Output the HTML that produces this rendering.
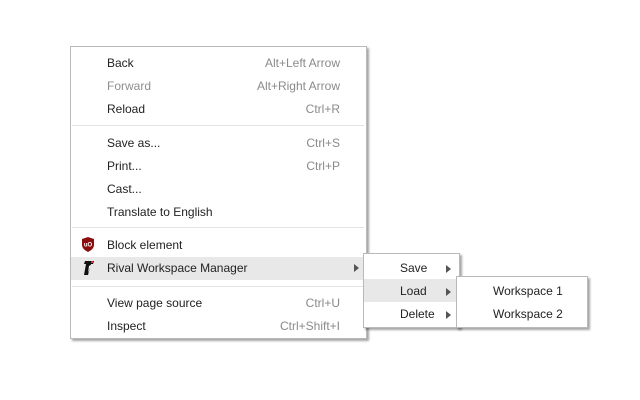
<!DOCTYPE html>
<html><head><meta charset="utf-8"><style>
body{margin:0;width:640px;height:400px;background:#fff;position:relative;overflow:hidden;font-family:"Liberation Sans",sans-serif;font-size:12px;color:#222}
.m{position:absolute;background:#fff;border:1px solid #b9b9b9;box-shadow:2px 2px 2px rgba(0,0,0,.35)}
.i{position:absolute;height:23px;line-height:23px;white-space:nowrap}
.s{position:absolute;color:#8a8a8a;text-align:right;height:23px;line-height:23px}
.sep{position:absolute;height:1px;background:#e3e3e3}
.hl{position:absolute;background:#e8e8e8}
.ar{position:absolute;width:0;height:0;border-top:4px solid transparent;border-bottom:4px solid transparent;border-left:5px solid #555}
.g{color:#8f8f8f}
</style></head><body>
<div class="m" style="left:70px;top:46px;width:295px;height:291px"></div>
<div class="hl" style="left:71px;top:257px;width:295px;height:23px"></div>
<div class="i" style="left:107px;top:52px">Back</div><div class="s" style="right:300px;top:52px">Alt+Left Arrow</div>
<div class="i g" style="left:107px;top:75px">Forward</div><div class="s" style="right:300px;top:75px">Alt+Right Arrow</div>
<div class="i" style="left:107px;top:98px">Reload</div><div class="s" style="right:300px;top:98px">Ctrl+R</div>
<div class="sep" style="left:72px;top:125px;width:292px"></div>
<div class="i" style="left:107px;top:132px">Save as...</div><div class="s" style="right:300px;top:132px">Ctrl+S</div>
<div class="i" style="left:107px;top:155px">Print...</div><div class="s" style="right:300px;top:155px">Ctrl+P</div>
<div class="i" style="left:107px;top:178px">Cast...</div>
<div class="i" style="left:107px;top:201px">Translate to English</div>
<div class="sep" style="left:72px;top:227px;width:292px"></div>
<svg style="position:absolute;left:81px;top:237px" width="14" height="15" viewBox="0 0 14 15"><path d="M1 2 L7 0 L13 2 L13 8 Q13 12 7 15 Q1 12 1 8Z" fill="#8b0e0e"/><text x="7" y="9.5" font-size="6" fill="#fff" text-anchor="middle" font-family="Liberation Sans" font-weight="bold">uO</text></svg>
<div class="i" style="left:107px;top:234px">Block element</div>
<svg style="position:absolute;left:82px;top:260px" width="12" height="16" viewBox="0 0 12 16"><path d="M3 1 L12 1 L11 4 L9 4 L6 15 L2 15 L4 4 L2 4Z" fill="#111"/><path d="M7 6 L9 5 L6 13Z" fill="#fff"/><rect x="9" y="1" width="2" height="2" fill="#c33"/></svg>
<div class="i" style="left:107px;top:257px">Rival Workspace Manager</div>
<div class="ar" style="left:354px;top:264px"></div>
<div class="sep" style="left:72px;top:286px;width:292px"></div>
<div class="i" style="left:107px;top:292px">View page source</div><div class="s" style="right:300px;top:292px">Ctrl+U</div>
<div class="i" style="left:107px;top:315px">Inspect</div><div class="s" style="right:300px;top:315px">Ctrl+Shift+I</div>

<div class="m" style="left:363px;top:253px;width:95px;height:73px"></div>
<div class="hl" style="left:364px;top:279px;width:95px;height:23px"></div>
<div class="i" style="left:400px;top:257px">Save</div><div class="ar" style="left:446px;top:265px"></div>
<div class="i" style="left:400px;top:280px">Load</div><div class="ar" style="left:446px;top:288px"></div>
<div class="i" style="left:400px;top:303px">Delete</div><div class="ar" style="left:446px;top:311px"></div>

<div class="m" style="left:456px;top:276px;width:130px;height:50px"></div>
<div class="i" style="left:493px;top:280px">Workspace 1</div>
<div class="i" style="left:493px;top:303px">Workspace 2</div>
</body></html>
